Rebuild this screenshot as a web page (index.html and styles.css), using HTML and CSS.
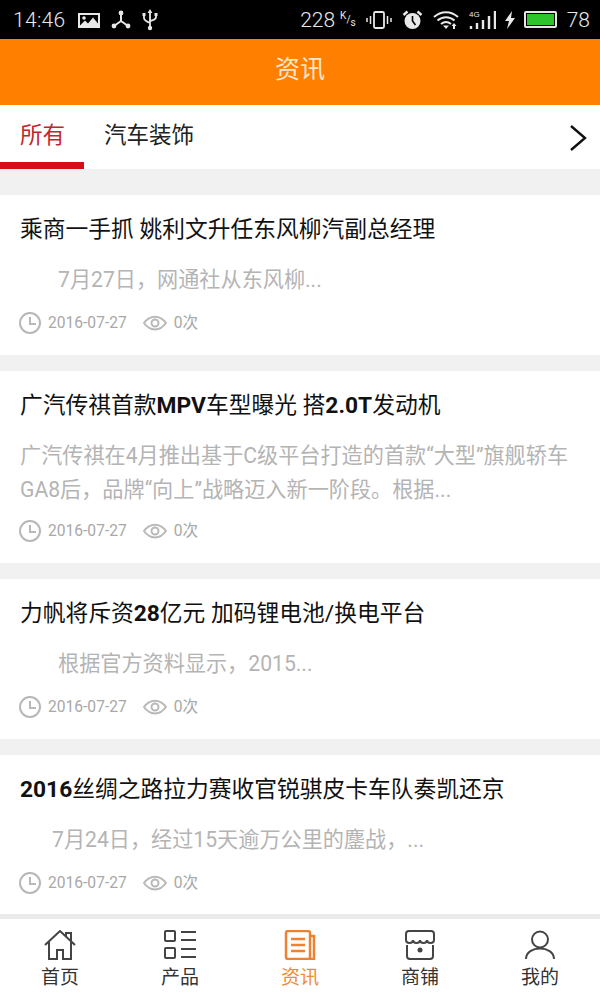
FILE: index.html

```html
<!DOCTYPE html>
<html>
<head>
  <meta charset="utf-8">
  <title>资讯</title>
  <link rel="stylesheet" href="styles.css">
</head>
<body>

<div class="status">
  <span class="time">14:46</span>
  <svg class="st" width="22" height="16" viewBox="0 0 22 16"><path fill="#e8e8e8" fill-rule="evenodd" d="M0 1h22v15H0zM2 13.500l5-5 3 3 5-6 5 6V3H2z"/><circle cx="6" cy="6" r="1.800" fill="#e8e8e8"/></svg>
  <svg class="st" width="22" height="20" viewBox="0 0 22 20"><path stroke="#e8e8e8" stroke-width="2" fill="none" d="M11 3v8M11 11l-7 5M11 11l7 5"/><circle cx="11" cy="3" r="2.400" fill="#e8e8e8"/><circle cx="4" cy="16" r="2.400" fill="#e8e8e8"/><circle cx="18" cy="16" r="2.400" fill="#e8e8e8"/></svg>
  <svg class="st" width="16" height="22" viewBox="0 0 16 22"><path stroke="#e8e8e8" stroke-width="1.800" fill="none" d="M8 3v16M2 6v3c0 2 1 3 6 5M14 6v2c0 2-1 3-6 4"/><path fill="#e8e8e8" d="M8 0l2.400 4H5.600zM.5 4h3v3h-3zM12.500 4h3v3h-3z"/><circle cx="8" cy="19" r="2.200" fill="#e8e8e8"/></svg>
  <span class="st-right">
    <span class="speed">228</span><span class="unit"><sup>K</sup>/<sub>s</sub></span>
    <svg width="26" height="20" viewBox="0 0 26 20"><rect x="8" y="2" width="10" height="16" rx="1.500" fill="none" stroke="#e8e8e8" stroke-width="1.800"/><path stroke="#e8e8e8" stroke-width="1.500" d="M4.500 6v8M1 8v4M21.500 6v8M25 8v4"/></svg>
    <svg width="21" height="20" viewBox="0 0 20 20"><circle cx="10" cy="11" r="8" fill="#e8e8e8"/><path stroke="#000" stroke-width="1.600" fill="none" d="M10 6v5l3 4"/><path stroke="#e8e8e8" stroke-width="2.500" d="M1 5l4-3.500M19 5l-4-3.500"/></svg>
    <svg width="26" height="20" viewBox="0 0 26 20"><path fill="none" stroke="#e8e8e8" stroke-width="2" d="M1 7c7-6.500 17-6.500 24 0M4.500 10.500c5-4.500 12-4.500 17 0M8 14c3-2.500 7-2.500 10 0"/><path fill="#e8e8e8" d="M10 15.500h6L13 19zM20 19v-3h-1.500l2.500-3 2.500 3H22v3z"/></svg>
    <svg class="sig" width="27" height="20" viewBox="0 0 27 20"><text x="0" y="7" font-size="8" font-family="Liberation Sans" fill="#e8e8e8">4G</text><path stroke="#e8e8e8" stroke-width="2.400" d="M2 19v-3M8 19v-6M14 19v-9M20 19V6M26 19V1"/></svg>
    <svg class="bolt" width="12" height="20" viewBox="0 0 12 20"><path fill="#e8e8e8" d="M8 1L1 11h4l-2 8 8-11H7z"/></svg>
    <span class="batt"><span class="batt-fill"></span></span>
    <span class="speed">78</span>
  </span>
</div>

<div class="header">资讯</div>

<div class="tabs">
  <span class="tab on">所有</span>
  <span class="tab">汽车装饰</span>
  <svg class="more" width="20" height="30" viewBox="0 0 20 30"><path fill="none" stroke="#111" stroke-width="2.400" d="M3 3l14 12L3 27"/></svg>
</div>

<div class="list">
  <div class="card">
    <h2>乘商一手抓 姚利文升任东风柳汽副总经理</h2>
    <p class="short">7月27日，网通社从东风柳...</p>
    <div class="meta">
      <svg width="24" height="24" viewBox="0 0 24 24"><circle cx="12" cy="12" r="10" class="ic"/><path class="ic" d="M12 6v7h6"/></svg>
      <span class="date">2016-07-27</span>
      <svg class="eye" width="24" height="24" viewBox="0 0 24 24"><path class="ic" d="M1 12c6-8.500 16-8.500 22 0-6 8.500-16 8.500-22 0z"/><circle cx="12" cy="12" r="3.500" class="ic"/></svg>
      <span class="date">0次</span>
    </div>
  </div>

  <div class="card tall">
    <h2>广汽传祺首款<b>MPV</b>车型曝光 搭<b>2.0T</b>发动机</h2>
    <p>广汽传祺在4月推出基于C级平台打造的首款“大型”旗舰轿车GA8后，品牌“向上”战略迈入新一阶段。根据...</p>
    <div class="meta">
      <svg width="24" height="24" viewBox="0 0 24 24"><circle cx="12" cy="12" r="10" class="ic"/><path class="ic" d="M12 6v7h6"/></svg>
      <span class="date">2016-07-27</span>
      <svg class="eye" width="24" height="24" viewBox="0 0 24 24"><path class="ic" d="M1 12c6-8.500 16-8.500 22 0-6 8.500-16 8.500-22 0z"/><circle cx="12" cy="12" r="3.500" class="ic"/></svg>
      <span class="date">0次</span>
    </div>
  </div>

  <div class="card">
    <h2>力帆将斥资<b>28</b>亿元 加码锂电池/换电平台</h2>
    <p class="short">根据官方资料显示，2015...</p>
    <div class="meta">
      <svg width="24" height="24" viewBox="0 0 24 24"><circle cx="12" cy="12" r="10" class="ic"/><path class="ic" d="M12 6v7h6"/></svg>
      <span class="date">2016-07-27</span>
      <svg class="eye" width="24" height="24" viewBox="0 0 24 24"><path class="ic" d="M1 12c6-8.500 16-8.500 22 0-6 8.500-16 8.500-22 0z"/><circle cx="12" cy="12" r="3.500" class="ic"/></svg>
      <span class="date">0次</span>
    </div>
  </div>

  <div class="card">
    <h2><b>2016</b>丝绸之路拉力赛收官锐骐皮卡车队奏凯还京</h2>
    <p class="short less">7月24日，经过15天逾万公里的鏖战，...</p>
    <div class="meta">
      <svg width="24" height="24" viewBox="0 0 24 24"><circle cx="12" cy="12" r="10" class="ic"/><path class="ic" d="M12 6v7h6"/></svg>
      <span class="date">2016-07-27</span>
      <svg class="eye" width="24" height="24" viewBox="0 0 24 24"><path class="ic" d="M1 12c6-8.500 16-8.500 22 0-6 8.500-16 8.500-22 0z"/><circle cx="12" cy="12" r="3.500" class="ic"/></svg>
      <span class="date">0次</span>
    </div>
  </div>
</div>

<div class="nav">
  <div class="nav-item">
    <svg width="32" height="30" viewBox="0 0 32 30"><path class="nv" d="M1 15L16 1l15 14M5 12v17h8v-9h6v9h8V12M22 6V3h5v8"/></svg>
    <span>首页</span>
  </div>
  <div class="nav-item">
    <svg width="32" height="30" viewBox="0 0 32 30"><rect x="1" y="1" width="10" height="10" rx="1" class="nv"/><rect x="1" y="18" width="10" height="10" rx="1" class="nv"/><path class="nv" d="M17 2h15M17 10h15M17 19h15M17 27h15"/></svg>
    <span>产品</span>
  </div>
  <div class="nav-item active">
    <svg width="32" height="30" viewBox="0 0 32 30"><path class="nv thick" d="M4 1h20a2 2 0 0 1 2 2v26H4a2 2 0 0 1-2-2V3a2 2 0 0 1 2-2zM26 6h4v23h-4M7 9h14M7 15h14M7 21h14"/></svg>
    <span>资讯</span>
  </div>
  <div class="nav-item">
    <svg width="32" height="30" viewBox="0 0 32 30"><path class="nv" d="M2 10V4a3 3 0 0 1 3-3h22a3 3 0 0 1 3 3v6M2 10q0 3 3.500 3t3.500-3q0 3 3.500 3t3.500-3q0 3 3.500 3t3.500-3q0 3 3.500 3t3.500-3M3 15v11a3 3 0 0 0 3 3h20a3 3 0 0 0 3-3V15"/><circle cx="16" cy="20" r="2.500" fill="#444"/></svg>
    <span>商铺</span>
  </div>
  <div class="nav-item">
    <svg width="32" height="30" viewBox="0 0 32 30"><circle cx="16" cy="9.500" r="8" class="nv"/><path class="nv" d="M2 29c0-14 28-14 28 0"/></svg>
    <span>我的</span>
  </div>
</div>

</body>
</html>
```

FILE: styles.css

```css
* { box-sizing: border-box; }
body { margin: 0; height: 1000px; overflow: hidden; background: #f1f1f1; font-family: Roboto, "Noto Sans CJK SC", sans-serif; }

.status { height: 39px; background: #000; color: #e8e8e8; display: flex; align-items: center; padding: 0 10px 0 13px; }
.time { font-size: 21px; font-weight: 300; margin-right: 12px; letter-spacing: .3px; }
.st { margin-right: 10px; }
.st-right { margin-left: auto; display: flex; align-items: center; gap: 10px; }
.speed { font-size: 21px; font-weight: 300; }
.unit { font-size: 10px; margin-left: -5px; }
.unit sup, .unit sub { font-size: 10px; }
.sig { margin-right: -2px; }
.bolt { margin-right: -2px; }
.batt { width: 33px; height: 17px; border: 2px solid #e8e8e8; border-radius: 2px; padding: 1px; display: flex; }
.batt-fill { flex: 1; background: #2dc52b; }

.header { height: 66px; padding-bottom: 10px; background: #ff7f00; color: #ffe6cc; font-size: 25px; display: flex; align-items: center; justify-content: center; }

.tabs { height: 64px; background: #fff; display: flex; align-items: flex-start; position: relative; }
.tab { font-size: 22.500px; line-height: 60px; color: #222; padding: 0 20px; white-space: nowrap; }
.tab.on { width: 84px; height: 64px; color: #c0272d; border-bottom: 7px solid #d80c12; }
.more { position: absolute; right: 12px; top: 18px; }

.list { padding-top: 26px; display: flex; flex-direction: column; gap: 16px; }
.card { background: #fff; padding: 18px 20px 0; height: 160px; }
.card.tall { height: 192px; }
.card h2 { margin: 0; font-size: 22.750px; font-weight: 400; line-height: 34px; color: #111; }
.card h2 b { font-weight: 700; }
.card p { margin: 16px 0 0; font-size: 21.150px; line-height: 34px; color: #b4b4b4; }
.card p.short { height: 36px; text-indent: 38px; }
.card p.short.less { text-indent: 32px; }
.meta { display: flex; align-items: center; margin-top: 12px; margin-left: -2px; color: #a8a8a8; }
.date { font-size: 15.600px; line-height: 24px; height: 24px; margin-left: 6px; }
.eye { margin-left: 16px; }
.eye + .date { margin-left: 7px; }
.ic { fill: none; stroke: #b8b8b8; stroke-width: 2; }

.nav { position: fixed; left: 0; right: 0; bottom: 0; height: 86px; background: #fff; border-top: 5px solid #ebebeb; display: flex; }
.nav-item { flex: 1; display: flex; flex-direction: column; align-items: center; padding-top: 11px; font-size: 19px; line-height: 26px; color: #333; }
.nav-item svg { margin-bottom: 5px; }
.nv { fill: none; stroke: #444; stroke-width: 2; }
.nv.thick { stroke-width: 2.500; }
.active { color: #ee8c35; }
.active .nv { stroke: #ee8230; }
```
